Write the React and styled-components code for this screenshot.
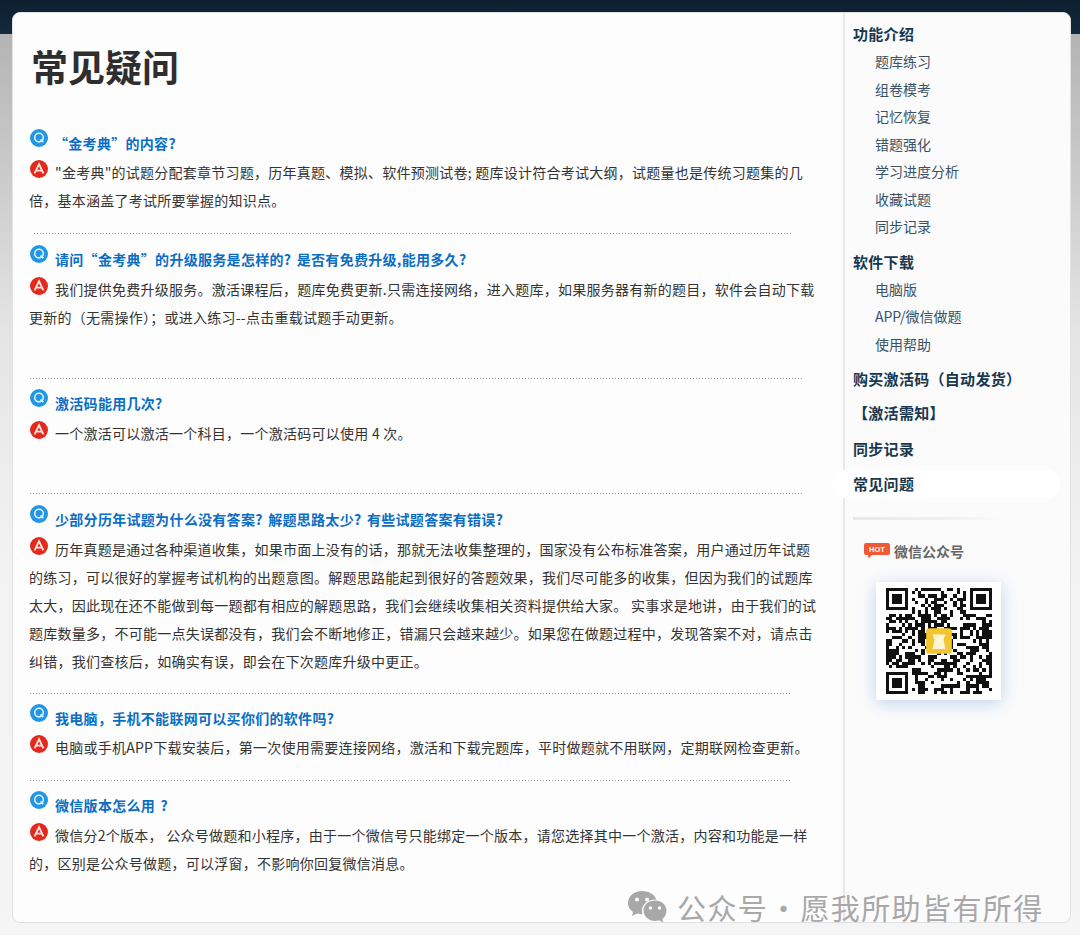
import React from "react";
import styled, { createGlobalStyle } from "styled-components";

const GlobalStyle = createGlobalStyle`
  html, body {
    margin: 0;
    padding: 0;
    background: #fff;
  }
  body {
    font-family: "Noto Sans CJK SC", "Liberation Sans", sans-serif;
  }
`;

const Page = styled.div`
  position: relative;
  width: 1080px;
  height: 951px;
  box-sizing: border-box;
  padding: 12px 9px 0 12px;
  overflow: hidden;
  background:
    linear-gradient(#0e2030 0, #13293c 34px, transparent 34px),
    linear-gradient(#fff 935px, #fff 951px) no-repeat 0 935px / 100% 16px,
    linear-gradient(#b4b4b4 34px, #e4e4e4 330px, #f2f2f2 560px, #f5f5f5 935px);
`;

const Card = styled.div`
  display: flex;
  height: 911px;
  box-sizing: border-box;
  background: #fdfdfd;
  border: 1px solid #e2e2e2;
  border-radius: 8px;
`;

const Main = styled.main`
  flex: 0 0 830px;
  box-sizing: border-box;
  padding: 0 22px 0 16px;
`;

const Title = styled.h1`
  margin: 29px 0 38px 2px;
  font-size: 37px;
  line-height: 48px;
  font-weight: 700;
  color: #2e2e2e;
`;

const Question = styled.h3`
  margin: 0;
  font-size: 14px;
  line-height: 30px;
  font-weight: 700;
  letter-spacing: 0.3px;
  word-spacing: 2px;
  color: #0b6dc4;
`;

const Answer = styled.p`
  margin: ${(p) => p.$gap || 0}px 0 0;
  font-size: 14px;
  line-height: 28px;
  letter-spacing: 0.25px;
  color: #333;
`;

const Badge = styled.svg`
  display: inline-block;
  width: 18px;
  height: 18px;
  margin-left: 1px;
  margin-right: ${(p) => p.$space || 7}px;
  vertical-align: ${(p) => p.$lift || 0}px;
`;

const Divider = styled.div`
  height: 1px;
  margin-top: ${(p) => p.$top}px;
  margin-bottom: ${(p) => p.$bottom}px;
  margin-left: ${(p) => (p.$inset ? 5 : 1)}px;
  width: ${(p) => p.$width}px;
  background: repeating-linear-gradient(90deg, #8f8f8f 0 1px, transparent 1px 3px);
`;

const Sidebar = styled.aside`
  flex: 1;
  min-width: 0;
  box-sizing: border-box;
  padding: 7px 8px 0 8px;
  border-left: 2px solid #e9e9e9;
  background: #fbfbfc;
  border-radius: 0 8px 8px 0;
`;

const NavHead = styled.a`
  display: block;
  margin-top: ${(p) => p.$top || 0}px;
  font-size: 15px;
  line-height: 28px;
  font-weight: 700;
  letter-spacing: 0.3px;
  white-space: nowrap;
  color: #17384f;
`;

const NavItem = styled.a`
  display: block;
  padding-left: 22px;
  font-size: 14px;
  line-height: 27.5px;
  color: #3a5266;
`;

const ActiveItem = styled(NavHead)`
  position: relative;
  box-sizing: border-box;
  width: 222px;
  margin-left: -15px;
  padding-left: 15px;
  background: #fff;
  border-radius: 0 10px 10px 0;

  &::before {
    content: "";
    position: absolute;
    left: -8px;
    top: 0;
    border-style: solid;
    border-width: 14px 8px 14px 0;
    border-color: transparent #fff transparent transparent;
  }
`;

const SideRule = styled.div`
  width: 148px;
  height: 3px;
  margin-top: 19px;
  background: linear-gradient(90deg, #e6e8ea, #eef0f1 65%, #fafafa);
`;

const HotRow = styled.div`
  display: flex;
  align-items: center;
  gap: 4px;
  margin: 19px 0 0 11px;
  height: 24px;
  font-size: 14px;
  font-weight: 700;
  color: #666;
`;

const QrCard = styled.div`
  width: 125px;
  height: 118px;
  margin: 19px 0 0 23px;
  display: flex;
  align-items: center;
  justify-content: center;
  background: #fff;
  box-shadow: 0 3px 16px rgba(130, 175, 225, 0.5);
`;

const Watermark = styled.div`
  position: absolute;
  left: 627px;
  top: 887px;
  display: flex;
  align-items: center;
  gap: 10px;
  font-size: 29px;
  line-height: 40px;
  letter-spacing: 1.4px;
  word-spacing: -7px;
  white-space: nowrap;
  color: #a8a8a8;
`;

const QIcon = ({ space }) => (
  <Badge viewBox="0 0 18 18" $space={space} $lift={2}>
    <circle cx="9" cy="9" r="9" fill="#2196e6" />
    <circle cx="9" cy="8.6" r="4.3" fill="none" stroke="#dff1fd" strokeWidth="1.6" />
    <path d="M10.5 10.5l2.8 2.5" stroke="#dff1fd" strokeWidth="1.7" />
  </Badge>
);

const AIcon = () => (
  <Badge viewBox="0 0 18 18">
    <circle cx="9" cy="9" r="9" fill="#e2291c" />
    <path d="M4.6 13.4L9 4.2l4.4 9.2M6.1 10.6h5.8" fill="none" stroke="#fbe4e0" strokeWidth="1.9" />
  </Badge>
);

const HotBadge = () => (
  <svg width="26" height="16" viewBox="0 0 26 16">
    <path d="M2 0h22a2 2 0 0 1 2 2v8a2 2 0 0 1-2 2H8l-3.4 3.6L4 12H2a2 2 0 0 1-2-2V2a2 2 0 0 1 2-2z" fill="#ee5a35" />
    <text x="13" y="9" textAnchor="middle" fontFamily="Liberation Sans, sans-serif" fontSize="7.5" fontWeight="700" fill="#fff">HOT</text>
  </svg>
);

const WechatIcon = () => (
  <svg width="40" height="34" viewBox="0 0 40 34">
    <path d="M15 1C7 1 1 6 1 13c0 4 2 7 5 9l-1 4 5-2.500c2 .6 3.500.8 5.500.8-.4-1.300-.6-2.400-.6-3.600C15 14 21 9.500 28.500 9.500h1C27.500 4.500 22 1 15 1z" fill="#a8a8a8" />
    <path d="M39.500 20.500c0-6-5.500-10-11.500-10s-11.500 4-11.500 10S22 31 28 31c1.500 0 3-.3 4.300-.7l4 2.400-1-3.600c2.600-2 4.200-5 4.200-8.600z" fill="#a8a8a8" />
    <circle cx="10" cy="9.500" r="2" fill="#fdfdfd" />
    <circle cx="20" cy="9.500" r="2" fill="#fdfdfd" />
    <circle cx="23.500" cy="18" r="1.700" fill="#fdfdfd" />
    <circle cx="32.500" cy="18" r="1.700" fill="#fdfdfd" />
  </svg>
);

// the reference code can't be read cell by cell, so the modules are seeded
const QR_SIZE = 33;

const inFinder = (x, y) => {
  const near = (v) => v < 8;
  const far = (v) => v >= QR_SIZE - 8;
  return (near(x) && near(y)) || (far(x) && near(y)) || (near(x) && far(y));
};

const buildCells = () => {
  const cells = [];
  let seed = 20240;
  for (let y = 0; y < QR_SIZE; y++) {
    for (let x = 0; x < QR_SIZE; x++) {
      seed = (seed * 16807) % 2147483647;
      if (!inFinder(x, y) && seed % 100 < 50) cells.push([x, y]);
    }
  }
  return cells;
};

const Finder = ({ x, y }) => (
  <g>
    <rect x={x} y={y} width="7" height="7" fill="#111" />
    <rect x={x + 1} y={y + 1} width="5" height="5" fill="#fff" />
    <rect x={x + 2} y={y + 2} width="3" height="3" fill="#111" />
  </g>
);

const QrCode = () => (
  <svg width="106" height="106" viewBox="0 0 33 33" shapeRendering="crispEdges">
    {buildCells().map(([x, y]) => (
      <rect key={`${x}-${y}`} x={x} y={y} width="1" height="1" fill="#111" />
    ))}
    <Finder x={0} y={0} />
    <Finder x={26} y={0} />
    <Finder x={0} y={26} />
    <g shapeRendering="auto">
      <rect x="12.500" y="12.500" width="8" height="8" rx="1" fill="#f3c52f" />
      <path d="M14.500 14.500h4l-.6 1.500.6 3h-4l.6-3z" fill="#fff6d8" />
    </g>
  </svg>
);

const featureLinks = ["题库练习", "组卷模考", "记忆恢复", "错题强化", "学习进度分析", "收藏试题", "同步记录"];
const downloadLinks = ["电脑版", "APP/微信做题", "使用帮助"];

export default function App() {
  return (
    <>
      <GlobalStyle />
      <Page>
        <Card>
          <Main>
            <Title>常见疑问</Title>

            <Question><QIcon space={6} />“金考典”的内容?</Question>
            <Answer>
              <AIcon />"金考典"的试题分配套章节习题，历年真题、模拟、软件预测试卷; 题库设计符合考试大纲，试题量也是传统习题集的几倍，基本涵盖了考试所要掌握的知识点。
            </Answer>
            <Divider $inset $width={758} $top={19} $bottom={10} />

            <Question><QIcon />请问“金考典”的升级服务是怎样的? 是否有免费升级,能用多久?</Question>
            <Answer $gap={1}>
              <AIcon />我们提供免费升级服务。激活课程后，题库免费更新.只需连接网络，进入题库，如果服务器有新的题目，软件会自动下载更新的（无需操作）；或进入练习--点击重载试题手动更新。
            </Answer>
            <Divider $width={772} $top={47} $bottom={9} />

            <Question><QIcon />激活码能用几次?</Question>
            <Answer $gap={1}><AIcon />一个激活可以激活一个科目，一个激活码可以使用 4 次。</Answer>
            <Divider $width={772} $top={46} $bottom={10} />

            <Question><QIcon />少部分历年试题为什么没有答案? 解题思路太少? 有些试题答案有错误?</Question>
            <Answer $gap={1}>
              <AIcon />历年真题是通过各种渠道收集，如果市面上没有的话，那就无法收集整理的，国家没有公布标准答案，用户通过历年试题的练习，可以很好的掌握考试机构的出题意图。解题思路能起到很好的答题效果，我们尽可能多的收集，但因为我们的试题库太大，因此现在还不能做到每一题都有相应的解题思路，我们会继续收集相关资料提供给大家。 实事求是地讲，由于我们的试题库数量多，不可能一点失误都没有，我们会不断地修正，错漏只会越来越少。如果您在做题过程中，发现答案不对，请点击纠错，我们查核后，如确实有误，即会在下次题库升级中更正。
            </Answer>
            <Divider $width={762} $top={18} $bottom={9} />

            <Question><QIcon />我电脑，手机不能联网可以买你们的软件吗?</Question>
            <Answer><AIcon />电脑或手机APP下载安装后，第一次使用需要连接网络，激活和下载完题库，平时做题就不用联网，定期联网检查更新。</Answer>
            <Divider $width={762} $top={19} $bottom={9} />

            <Question><QIcon />微信版本怎么用 ?</Question>
            <Answer $gap={1}>
              <AIcon />微信分2个版本， 公众号做题和小程序，由于一个微信号只能绑定一个版本，请您选择其中一个激活，内容和功能是一样的，区别是公众号做题，可以浮窗，不影响你回复微信消息。
            </Answer>
          </Main>

          <Sidebar>
            <NavHead>功能介绍</NavHead>
            {featureLinks.map((label) => <NavItem key={label}>{label}</NavItem>)}
            <NavHead $top={7}>软件下载</NavHead>
            {downloadLinks.map((label) => <NavItem key={label}>{label}</NavItem>)}
            <NavHead $top={7}>购买激活码（自动发货）</NavHead>
            <NavHead $top={6}>【激活需知】</NavHead>
            <NavHead $top={8}>同步记录</NavHead>
            <ActiveItem $top={7}>常见问题</ActiveItem>
            <SideRule />
            <HotRow><HotBadge />微信公众号</HotRow>
            <QrCard><QrCode /></QrCard>
          </Sidebar>
        </Card>
        <Watermark><WechatIcon />公众号 · 愿我所助皆有所得</Watermark>
      </Page>
    </>
  );
}
